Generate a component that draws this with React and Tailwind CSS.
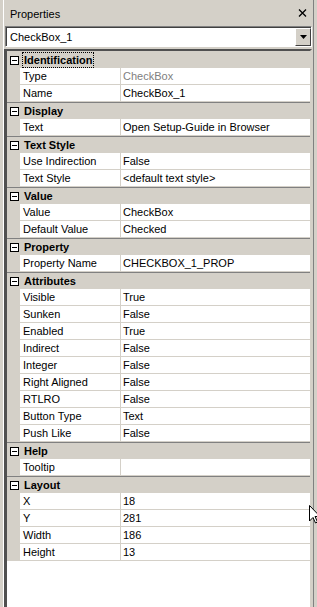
import React from 'react';

const sections = [
  { title: 'Identification', focus: true, rows: [['Type', 'CheckBox', true], ['Name', 'CheckBox_1']] },
  { title: 'Display', rows: [['Text', 'Open Setup-Guide in Browser']] },
  { title: 'Text Style', rows: [['Use Indirection', 'False'], ['Text Style', '<default text style>']] },
  { title: 'Value', rows: [['Value', 'CheckBox'], ['Default Value', 'Checked']] },
  { title: 'Property', rows: [['Property Name', 'CHECKBOX_1_PROP']] },
  {
    title: 'Attributes',
    rows: [
      ['Visible', 'True'],
      ['Sunken', 'False'],
      ['Enabled', 'True'],
      ['Indirect', 'False'],
      ['Integer', 'False'],
      ['Right Aligned', 'False'],
      ['RTLRO', 'False'],
      ['Button Type', 'Text'],
      ['Push Like', 'False'],
    ],
  },
  { title: 'Help', rows: [['Tooltip', '']] },
  { title: 'Layout', rows: [['X', '18'], ['Y', '281'], ['Width', '186'], ['Height', '13']] },
];

function MinusBox() {
  return (
    <svg width="9" height="9" viewBox="0 0 9 9" className="block">
      <rect x="0.5" y="0.5" width="8" height="8" fill="#ffffff" stroke="#000000" />
      <line x1="2" y1="4.5" x2="7" y2="4.5" stroke="#000000" />
    </svg>
  );
}

function Category({ title, focus, first }) {
  return (
    <div
      className={`h-[17px] flex items-center bg-[#d4d0c8] ${
        first ? 'border-t border-[#d4d0c8]' : 'border-t border-[#808080]'
      }`}
    >
      <div className="w-[14px] flex justify-center">
        <MinusBox />
      </div>
      <span
        className={`ml-[1px] px-[1px] h-[16px] leading-[15px] font-bold ${
          focus ? 'border border-dotted border-black' : 'border border-transparent'
        }`}
      >
        {title}
      </span>
    </div>
  );
}

function Row({ name, value, readOnly }) {
  return (
    <div className="h-[17px] flex bg-[#d4d0c8]">
      <div className="w-[13px] shrink-0" />
      <div className="w-[101px] shrink-0 bg-white border-b border-r border-[#d4d0c8] pl-[3px] leading-[16px] whitespace-nowrap overflow-hidden">
        {name}
      </div>
      <div
        className={`flex-1 bg-white border-b border-[#d4d0c8] pl-[2px] leading-[16px] whitespace-nowrap overflow-hidden ${
          readOnly ? 'text-[#808080]' : 'text-black'
        }`}
      >
        {value}
      </div>
    </div>
  );
}

export default function App() {
  return (
    <div className="w-[317px] h-[607px] bg-[#d4d0c8] relative overflow-hidden font-['Liberation_Sans',Arial,sans-serif] text-[11px] text-black">
      <div className="ml-[3px] w-[311px] h-full flex flex-col border-l border-white border-r border-r-[#808080]">
        {/* title */}
        <div className="h-[26px] flex items-center justify-between pl-[6px] pr-[6px] shrink-0">
          <span className="text-[11px] mt-[2px]">Properties</span>
          <svg width="9" height="8" viewBox="0 0 9 8">
            <path d="M1 0.5 L8 7.5 M8 0.5 L1 7.5" stroke="#000" strokeWidth="1.3" />
          </svg>
        </div>

        {/* combo */}
        <div className="mx-[1px] h-[21px] flex bg-white border-t border-l border-[#808080] border-b border-r border-b-white border-r-white shrink-0">
          <div className="flex-1 flex items-center pl-[3px] border-t border-l border-[#404040]">CheckBox_1</div>
          <div className="w-[16px] border-t border-[#404040] flex">
            <div className="flex-1 flex items-center justify-center bg-[#d4d0c8] border-t border-l border-white border-b border-r border-b-[#404040] border-r-[#404040]">
              <svg width="7" height="4" viewBox="0 0 7 4">
                <path d="M0 0 H7 L3.5 4 Z" fill="#000" />
              </svg>
            </div>
          </div>
        </div>

        {/* grid */}
        <div className="mt-[2px] flex-1 bg-white border-t-2 border-[#505050] border-l-[3px] border-l-[#505050] border-r-[2px] border-r-[#d4d0c8] mr-[1px] overflow-hidden">
          {sections.map((s, si) => (
            <div key={s.title}>
              <Category title={s.title} focus={s.focus} first={si === 0} />
              {s.rows.map(([n, v, ro], i) => (
                <Row key={i} name={n} value={v} readOnly={ro} />
              ))}
            </div>
          ))}
        </div>
      </div>

      {/* mouse cursor */}
      <svg width="12" height="19" viewBox="0 0 12 19" className="absolute left-[309px] top-[505px]">
        <path d="M0.5 0.5 V16 L4 12.5 L6.5 18 L8.5 17 L6 11.5 H11 Z" fill="#fff" stroke="#000" />
      </svg>
    </div>
  );
}
